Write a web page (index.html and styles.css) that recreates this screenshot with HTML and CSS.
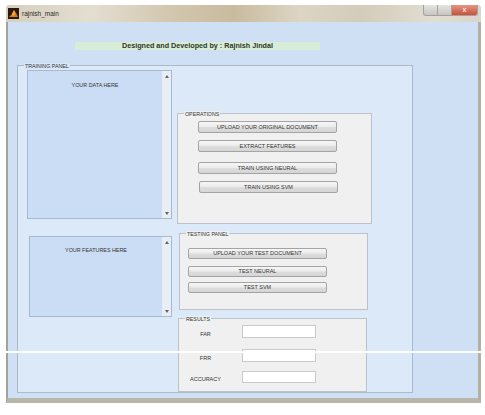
FILE: index.html
```html
<!DOCTYPE html>
<html lang="en">
<head>
  <meta charset="UTF-8" />
  <title>rajnish_main</title>
  <link rel="stylesheet" href="styles.css">
</head>
<body>
  <div class="window">
    <div class="titlebar">
      <svg class="app-icon" width="11" height="11" viewBox="0 0 11 11">
        <rect width="11" height="11" fill="#2a1a10"/>
        <path d="M1 9 L4 6 L6 2 L8 5 L10 9 Z" fill="#e07a18"/>
        <path d="M6 2 L7 6 L5 8 L4 6 Z" fill="#f6b040"/>
      </svg>
      <span class="title">rajnish_main</span>
      <div class="win-buttons">
        <span class="wbtn min"></span>
        <span class="wbtn max"></span>
        <span class="wbtn close">x</span>
      </div>
    </div>

    <div class="client">
      <div class="heading-bar">Designed and Developed by : Rajnish Jindal</div>

      <div class="panel training">
        <span class="panel-title">TRAINING PANEL</span>

        <div class="left-col">
          <div class="listbox data">
            <div class="list-text">YOUR DATA HERE</div>
            <div class="scroll">
              <svg width="4" height="3" viewBox="0 0 4 3"><path d="M0 3 L2 0 L4 3 Z" fill="#666"/></svg>
              <svg width="4" height="3" viewBox="0 0 4 3"><path d="M0 0 L4 0 L2 3 Z" fill="#666"/></svg>
            </div>
          </div>
          <div class="listbox features">
            <div class="list-text">YOUR FEATURES HERE</div>
            <div class="scroll">
              <svg width="4" height="3" viewBox="0 0 4 3"><path d="M0 3 L2 0 L4 3 Z" fill="#666"/></svg>
              <svg width="4" height="3" viewBox="0 0 4 3"><path d="M0 0 L4 0 L2 3 Z" fill="#666"/></svg>
            </div>
          </div>
        </div>

        <div class="right-col">
          <div class="panel gray ops">
            <span class="panel-title">OPERATIONS</span>
            <button class="btn ops-1">UPLOAD YOUR ORIGINAL DOCUMENT</button>
            <button class="btn ops-2">EXTRACT FEATURES</button>
            <button class="btn ops-3">TRAIN USING NEURAL</button>
            <button class="btn ops-4">TRAIN USING SVM</button>
          </div>

          <div class="panel gray testing">
            <span class="panel-title">TESTING PANEL</span>
            <button class="btn test-1">UPLOAD YOUR TEST DOCUMENT</button>
            <button class="btn test-2">TEST NEURAL</button>
            <button class="btn test-3">TEST SVM</button>
          </div>

          <div class="panel gray results">
            <span class="panel-title">RESULTS</span>
            <div class="result-row r1">
              <span class="result-label">FAR</span>
              <input class="result-input" type="text">
            </div>
            <div class="result-row r2">
              <span class="result-label">FRR</span>
              <input class="result-input" type="text">
            </div>
            <div class="result-row r3">
              <span class="result-label">ACCURACY</span>
              <input class="result-input" type="text">
            </div>
          </div>
        </div>
      </div>
    </div>
  </div>

  <!-- scan artifact across the screenshot -->
  <div class="scanline"></div>
</body>
</html>
```

FILE: styles.css
```css
body {
  margin: 0;
  width: 485px;
  height: 415px;
  overflow: hidden;
  background: #ffffff;
  font-family: "Liberation Sans", Arial, sans-serif;
  position: relative;
}

.window {
  margin: 5px 0 0 6px;
  width: 475px;
}

.titlebar {
  height: 17px;
  display: flex;
  align-items: center;
  border-radius: 3px 3px 0 0;
  background: linear-gradient(90deg, #d6cfbf 0%, #e4ded1 18%, #d2c6ae 35%, #c9bb9f 48%, #ddd5c4 62%, #d4ccba 75%, #e2ddd2 90%, #d9d5cc 100%);
}

.app-icon {
  margin-left: 2px;
}

.title {
  margin-left: 3px;
  font-size: 6.5px;
  color: #2a2a2a;
}

.win-buttons {
  margin-left: auto;
  margin-right: 3px;
  align-self: flex-start;
  display: flex;
}

.wbtn {
  height: 11px;
  box-sizing: border-box;
  border: 1px solid #a4a29c;
  border-top: none;
}

.wbtn.min {
  width: 15px;
  border-radius: 0 0 0 3px;
  background: linear-gradient(#e6e4df, #c8c6c0);
}

.wbtn.max {
  width: 14px;
  border-left: none;
  background: linear-gradient(#e6e4df, #c8c6c0);
}

.wbtn.close {
  width: 26px;
  border-left: none;
  border-radius: 0 0 3px 0;
  background: linear-gradient(#e39684, #cc5038);
  color: #f4e8e4;
  font-size: 7px;
  font-weight: bold;
  text-align: center;
  line-height: 9px;
}

.client {
  height: 376px;
  background: #cfe0f5;
  border-left: 2px solid #a3a39a;
  border-right: 3px solid #b2b0a6;
  border-bottom: 5px solid #b9b7ab;
  display: flex;
  flex-direction: column;
  align-items: flex-start;
}

.heading-bar {
  margin: 20px 0 0 67px;
  width: 245px;
  height: 8px;
  background: #d9ecd7;
  font-size: 7.2px;
  font-weight: bold;
  line-height: 8px;
  text-align: center;
  color: #2c382c;
}

.panel {
  position: relative;
  box-sizing: border-box;
  border: 1px solid #adb9c8;
}

.panel-title {
  position: absolute;
  top: -3px;
  left: 6px;
  padding: 0 1px;
  font-size: 5.3px;
  line-height: 6px;
  color: #333333;
}

.training {
  margin: 15px 0 0 9px;
  width: 396px;
  height: 328px;
  background: #dce9f8;
  display: flex;
  align-items: flex-start;
}

.training > .panel-title {
  background: #d6e5f7;
}

.left-col {
  margin-left: 9px;
  width: 145px;
  display: flex;
  flex-direction: column;
}

.listbox {
  box-sizing: border-box;
  border: 1px solid #a9b8cb;
  background: #cbddf4;
  display: flex;
}

.listbox.data {
  margin-top: 4px;
  height: 149px;
}

.listbox.features {
  margin: 17px 0 0 2px;
  width: 143px;
  height: 81px;
}

.list-text {
  flex: 1;
  text-align: center;
  font-size: 5.4px;
  line-height: 6px;
  color: #333333;
}

.data .list-text {
  padding-top: 11px;
}

.features .list-text {
  padding-top: 10px;
}

.scroll {
  width: 9px;
  background: #e9eef5;
  display: flex;
  flex-direction: column;
  justify-content: space-between;
  align-items: center;
  padding: 4px 0 3px;
}

.right-col {
  margin-left: 5px;
  display: flex;
  flex-direction: column;
  align-items: flex-start;
}

.panel.gray {
  background: #f0f0f0;
  border-color: #bcc2ca;
  display: flex;
  flex-direction: column;
  align-items: flex-start;
}

.gray .panel-title {
  background: #f0f0f0;
}

.ops {
  margin-top: 47px;
  width: 195px;
  height: 111px;
}

.testing {
  margin: 9px 0 0 2px;
  width: 189px;
  height: 77px;
}

.results {
  margin: 8px 0 0 1px;
  width: 189px;
  height: 74px;
}

.btn {
  box-sizing: border-box;
  width: 139px;
  height: 12px;
  padding: 0;
  border: 1px solid #a4a4a4;
  border-radius: 2px;
  background: linear-gradient(#f6f6f6 0%, #ececec 45%, #dddddd 55%, #d5d5d5 100%);
  font-family: "Liberation Sans", Arial, sans-serif;
  font-size: 5.5px;
  color: #333333;
  line-height: 10px;
}

.ops-1 { margin: 7px 0 0 20px; }
.ops-2 { margin: 7px 0 0 20px; }
.ops-3 { margin: 10px 0 0 20px; }
.ops-4 { margin: 7px 0 0 21px; }

.testing .btn {
  height: 11px;
  line-height: 9px;
  margin-left: 8px;
}

.test-1 { margin-top: 14px; }
.test-2 { margin-top: 7px; }
.test-3 { margin-top: 5px; }

.result-row {
  display: flex;
  margin-left: 6px;
}

.r1 { margin-top: 6px; height: 13px; }
.r2 { margin-top: 11px; height: 13px; }
.r3 { margin-top: 9px; height: 12px; }

.result-label {
  width: 41px;
  align-self: flex-end;
  text-align: center;
  font-size: 5.5px;
  line-height: 8px;
  color: #333333;
}

.result-input {
  box-sizing: border-box;
  margin: 0 0 0 16px;
  width: 74px;
  height: 100%;
  padding: 0;
  border: 1px solid #cacaca;
  background: #ffffff;
}

.scanline {
  position: absolute;
  top: 351px;
  left: 5px;
  width: 477px;
  height: 2px;
  background: #ffffff;
}
```
